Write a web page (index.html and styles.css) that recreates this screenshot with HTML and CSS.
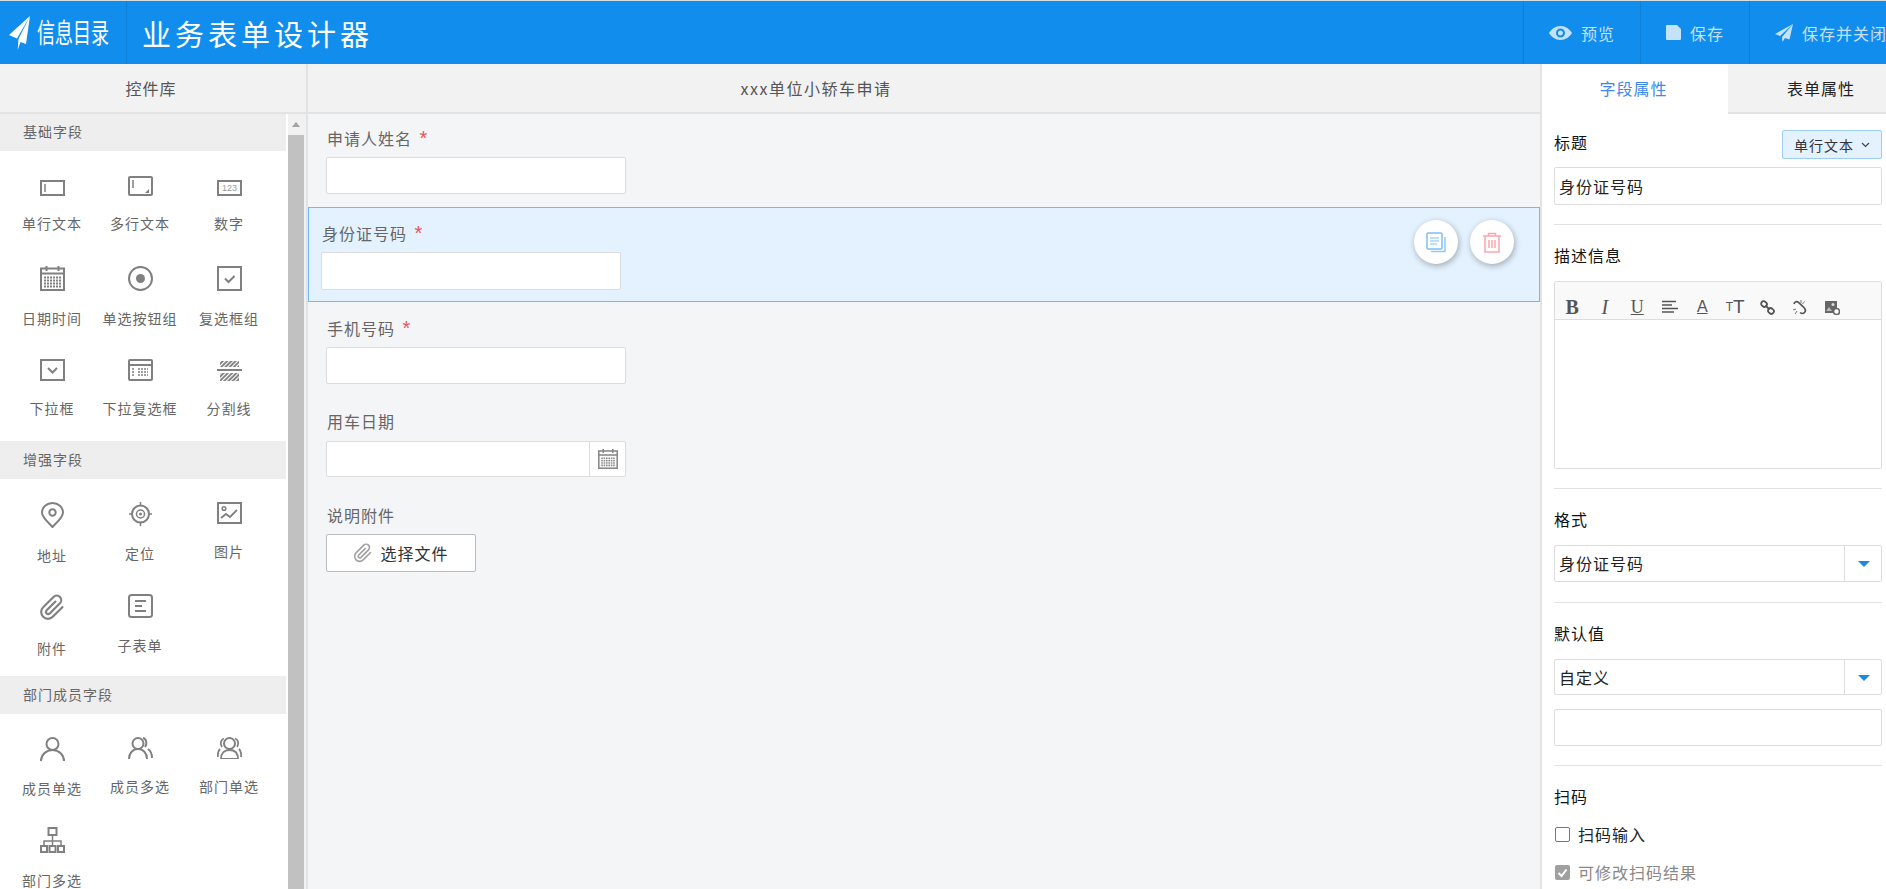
FILE: index.html
```html
<!DOCTYPE html>
<html lang="zh-CN">
<head>
    <meta charset="UTF-8">
    <title>业务表单设计器</title>
    <link rel="stylesheet" href="styles.css">
</head>
<body>
    <svg class="sprite" width="0" height="0">
        <symbol id="i-cal" viewBox="0 0 25 25">
            <path d="M6.5 0v5M18.5 0v5" stroke-width="2"/>
            <rect x="1" y="2.5" width="23" height="21.5" stroke-width="2"/>
            <path d="M1 7.5h23" stroke-width="2"/>
            <path d="M4 11.5h17M4 14.5h17M4 17.5h17M4 20.5h17" stroke-width="2" stroke-dasharray="2 1"/>
        </symbol>
        <symbol id="i-clip" viewBox="0 0 24 24">
            <path d="M21.4 11.1l-9.2 9.2a6 6 0 0 1-8.5-8.5l9.2-9.2a4 4 0 0 1 5.7 5.7l-9.2 9.2a2 2 0 0 1-2.8-2.8l8.5-8.5" stroke-width="1.9"/>
        </symbol>
    </svg>

    <header class="topbar">
        <div class="logo">
            <svg class="logo-plane" width="24" height="36" viewBox="0 0 24 36">
                <path d="M22 0L1 19l8 3.5L22 0zM22 0L10.5 23l-.8 11 2.8-8 5.5 2L22 0z" fill="#fff"/>
            </svg>
            <span class="logo-text">信息目录</span>
        </div>
        <div class="app-title">业务表单设计器</div>
        <div class="top-btn">
            <svg width="23" height="14" viewBox="0 0 23 14"><path d="M11.5 0C6.5 0 2.500 3 0 7c2.500 4 6.500 7 11.500 7S20.500 11 23 7C20.500 3 16.500 0 11.500 0zm0 11.500a4.500 4.500 0 1 1 0-9 4.500 4.500 0 0 1 0 9zm0-7a2.500 2.500 0 1 0 0 5 2.500 2.500 0 0 0 0-5z" fill="#c4e2fa" fill-rule="evenodd"/></svg>
            <span>预览</span>
        </div>
        <div class="top-btn">
            <svg width="15" height="15" viewBox="0 0 15 15"><path d="M1 0h10l4 4v10a1 1 0 0 1-1 1H1a1 1 0 0 1-1-1V1a1 1 0 0 1 1-1z" fill="#c4e2fa"/></svg>
            <span>保存</span>
        </div>
        <div class="top-btn">
            <svg width="18" height="18" viewBox="0 0 18 18"><path d="M18 0L0 10l5 2L18 0zM18 0L7 13l.5 5 2.500-4 4.500 1.500L18 0z" fill="#c4e2fa"/></svg>
            <span>保存并关闭</span>
        </div>
    </header>

    <main class="workspace">
        <aside class="lib">
            <div class="col-head">控件库</div>
            <div class="lib-body">
                <div class="lib-list">
                    <div class="lib-section">基础字段</div>
                    <div class="lib-grid lib-grid-base">
                        <div class="ctl">
                            <svg width="25" height="22" viewBox="0 0 25 22"><rect x="1" y="7" width="23" height="14" stroke-width="2"/><path d="M5 10v8" stroke-width="1.500"/></svg>
                            <span>单行文本</span>
                        </div>
                        <div class="ctl">
                            <svg width="25" height="22" viewBox="0 0 25 22"><rect x="1" y="3" width="23" height="18" rx="1" stroke-width="2"/><path d="M5 6v8" stroke-width="1.500"/><path d="M17 19l4-4v4z" fill="#808080" stroke="none"/></svg>
                            <span>多行文本</span>
                        </div>
                        <div class="ctl">
                            <svg width="25" height="22" viewBox="0 0 25 22"><rect x="1" y="7" width="23" height="14" stroke-width="2"/><text x="12.500" y="17" class="ico-num">123</text></svg>
                            <span>数字</span>
                        </div>
                        <div class="ctl">
                            <svg width="25" height="29" viewBox="0 0 25 29"><use href="#i-cal" y="4" width="25" height="25"/></svg>
                            <span>日期时间</span>
                        </div>
                        <div class="ctl">
                            <svg width="25" height="29" viewBox="0 0 25 29"><circle cx="12.500" cy="16.500" r="11.500" stroke-width="2"/><circle cx="12.500" cy="16.500" r="4.500" fill="#808080" stroke="none"/></svg>
                            <span>单选按钮组</span>
                        </div>
                        <div class="ctl">
                            <svg width="25" height="29" viewBox="0 0 25 29"><rect x="1" y="5" width="23" height="23" stroke-width="2"/><path d="M8 16.500l3.500 3.500 6-6" stroke-width="2"/></svg>
                            <span>复选框组</span>
                        </div>
                        <div class="ctl">
                            <svg width="25" height="24" viewBox="0 0 25 24"><rect x="1" y="3" width="23" height="20" stroke-width="2"/><path d="M8 11l4.500 4.500L17 11" stroke-width="2"/></svg>
                            <span>下拉框</span>
                        </div>
                        <div class="ctl">
                            <svg width="25" height="24" viewBox="0 0 25 24"><rect x="1" y="3" width="23" height="20" rx="1" stroke-width="2"/><path d="M1 8h23" stroke-width="2"/><path d="M4 12h3M4 15h3M4 18h3M10 12h10M10 15h10M10 18h10" stroke-width="1.500" stroke-dasharray="2 1"/></svg>
                            <span>下拉复选框</span>
                        </div>
                        <div class="ctl">
                            <svg width="25" height="24" viewBox="0 0 25 24"><defs><pattern id="hatch" width="3" height="3" patternUnits="userSpaceOnUse" patternTransform="rotate(45)"><rect width="1.500" height="3" fill="#aaa"/></pattern></defs><rect x="3" y="4" width="19" height="6" fill="url(#hatch)" stroke="none"/><path d="M0 13h25" stroke-width="2"/><rect x="3" y="16" width="19" height="8" fill="url(#hatch)" stroke="none"/></svg>
                            <span>分割线</span>
                        </div>
                    </div>

                    <div class="lib-section">增强字段</div>
                    <div class="lib-grid">
                        <div class="ctl">
                            <svg width="25" height="26" viewBox="0 0 25 26"><path d="M12.500 25C8 20 2 15.500 2 10.500a10.500 9.500 0 0 1 21 0C23 15.500 17 20 12.500 25z" stroke-width="2"/><circle cx="12.500" cy="10.500" r="3.200" stroke-width="2"/></svg>
                            <span>地址</span>
                        </div>
                        <div class="ctl">
                            <svg width="25" height="24" viewBox="0 0 25 24"><circle cx="12.500" cy="12" r="8.500" stroke-width="2"/><circle cx="12.500" cy="12" r="4" stroke-width="1.500"/><circle cx="12.500" cy="12" r="1.500" fill="#808080" stroke="none"/><path d="M12.500 0v3.500M12.500 20.500V24M1 12h3M21 12h3" stroke-width="1.500"/></svg>
                            <span>定位</span>
                        </div>
                        <div class="ctl">
                            <svg width="25" height="22" viewBox="0 0 25 22"><rect x="1" y="1" width="23" height="20" stroke-width="2"/><circle cx="7" cy="6.500" r="1.800" stroke-width="1.500"/><path d="M4 16l5-4 4 3 7-7" stroke-width="1.800"/></svg>
                            <span>图片</span>
                        </div>
                        <div class="ctl">
                            <svg width="27" height="27"><use href="#i-clip" width="27" height="27"/></svg>
                            <span>附件</span>
                        </div>
                        <div class="ctl">
                            <svg width="25" height="24" viewBox="0 0 25 24"><rect x="1" y="1" width="23" height="22" rx="2.500" stroke-width="2"/><path d="M7 7h11M7 12h7M7 17h11" stroke-width="1.800"/></svg>
                            <span>子表单</span>
                        </div>
                    </div>

                    <div class="lib-section">部门成员字段</div>
                    <div class="lib-grid">
                        <div class="ctl">
                            <svg width="25" height="24" viewBox="0 0 25 24"><circle cx="12.500" cy="7" r="6" stroke-width="2"/><path d="M1 24c0-6 5-11 11.500-11S24 18 24 24" stroke-width="2"/></svg>
                            <span>成员单选</span>
                        </div>
                        <div class="ctl">
                            <svg width="25" height="22" viewBox="0 0 25 22"><circle cx="10" cy="6.500" r="5.500" stroke-width="2"/><path d="M1 22c0-6 4-10 9-10s9 4 9 10M15 1c3.500 1 4.500 6 2 9M20 12c3 2 4 5 4 9" stroke-width="2"/></svg>
                            <span>成员多选</span>
                        </div>
                        <div class="ctl">
                            <svg width="25" height="22" viewBox="0 0 25 22"><circle cx="12.500" cy="6.500" r="5.500" stroke-width="2"/><path d="M4 22c0-6 3.500-9 8.500-9s8.500 3 8.500 9zM7 1.500C3.500 2.500 3 7 5 10M18 1.500c3.500 1 4 5.500 2 8.500M3 12c-2 2-2.500 5-2 8M22 12c2 2 2.500 5 2 8" stroke-width="1.800"/></svg>
                            <span>部门单选</span>
                        </div>
                        <div class="ctl">
                            <svg width="25" height="26" viewBox="0 0 25 26"><rect x="8.500" y="1" width="8" height="7" stroke-width="2"/><path d="M12.500 8v11M4 19v-5h17v5" stroke-width="1.500"/><rect x="1" y="19" width="6" height="6" stroke-width="2"/><rect x="9.500" y="19" width="6" height="6" stroke-width="2"/><rect x="18" y="19" width="6" height="6" stroke-width="2"/></svg>
                            <span>部门多选</span>
                        </div>
                    </div>
                </div>
                <div class="scrollbar">
                    <div class="scroll-up"></div>
                    <div class="scroll-thumb"></div>
                </div>
            </div>
        </aside>

        <section class="canvas">
            <div class="col-head canvas-head">xxx单位小轿车申请</div>
            <div class="field field-first">
                <label>申请人姓名 <em>*</em></label>
                <input class="text-input" type="text">
            </div>
            <div class="field field-active">
                <label>身份证号码 <em>*</em></label>
                <input class="text-input" type="text">
                <div class="field-tools">
                    <button class="round-btn">
                        <svg width="20" height="21" viewBox="0 0 20 21" fill="none"><path d="M5 19.500h14V5" stroke="#8ec9f7" stroke-width="1.500"/><rect x="1" y="1" width="15" height="16" rx="1" stroke="#7dbff5" stroke-width="1.500" fill="#fff"/><path d="M4 6h9M4 9h9M4 12h7" stroke="#a5d4f9" stroke-width="1.500"/></svg>
                    </button>
                    <button class="round-btn">
                        <svg width="20" height="21" viewBox="0 0 20 21" fill="none" stroke="#fba6ab" stroke-width="1.500"><path d="M1 4h18M6.500 4V1.500h7V4M3 4v16h14V4M7 8v8M10 8v8M13 8v8"/></svg>
                    </button>
                </div>
            </div>
            <div class="field field-phone">
                <label>手机号码 <em>*</em></label>
                <input class="text-input" type="text">
            </div>
            <div class="field field-date">
                <label>用车日期</label>
                <div class="date-input">
                    <span class="date-value"></span>
                    <span class="date-addon"><svg width="20" height="20"><use href="#i-cal" width="20" height="20"/></svg></span>
                </div>
            </div>
            <div class="field">
                <label>说明附件</label>
                <button class="file-btn">
                    <svg width="20" height="20"><use href="#i-clip" width="20" height="20"/></svg>
                    <span>选择文件</span>
                </button>
            </div>
        </section>

        <aside class="props">
            <div class="tabs">
                <div class="tab tab-on">字段属性</div>
                <div class="tab">表单属性</div>
            </div>
            <div class="props-body">
                <div class="prop prop-title">
                    <div class="prop-row">
                        <span class="prop-label">标题</span>
                        <span class="type-btn">单行文本
                            <svg width="9" height="6" viewBox="0 0 9 6" fill="none"><path d="M1 1l3.500 3.500L8 1" stroke="#444" stroke-width="1.200"/></svg>
                        </span>
                    </div>
                    <input class="prop-input" type="text" value="身份证号码">
                </div>
                <div class="prop">
                    <div class="prop-label">描述信息</div>
                    <div class="editor">
                        <div class="editor-bar">
                            <span class="tool tool-b">B</span>
                            <span class="tool tool-i">I</span>
                            <span class="tool tool-u">U</span>
                            <span class="tool"><svg width="16" height="14" viewBox="0 0 16 14" fill="none" stroke="#555" stroke-width="1.500"><path d="M0 1.500h14M0 5h10M0 8.500h16M0 12h12"/></svg></span>
                            <span class="tool tool-a">A</span>
                            <span class="tool tool-t"><small>T</small>T</span>
                            <span class="tool"><svg width="15" height="15" viewBox="0 0 15 15" fill="none" stroke="#555" stroke-width="1.800"><rect x="1" y="1.500" width="6" height="5" rx="2.500" transform="rotate(40 4 4)"/><rect x="8" y="8.500" width="6" height="5" rx="2.500" transform="rotate(40 11 11)"/><path d="M5.500 5.500l4 4"/></svg></span>
                            <span class="tool"><svg width="15" height="15" viewBox="0 0 15 15" fill="none" stroke="#555" stroke-width="1.700"><path d="M2 4c.5-2.500 3-3 4.500-1.500L11.500 7c2 2 2.500 4 1 5.500s-3.500 1-4.500 0"/><path d="M9 0v3M12.500 1.500L10.500 4M1 10l3-1M3 14l2-3" stroke-width="1" stroke="#777"/></svg></span>
                            <span class="tool"><svg width="15" height="15" viewBox="0 0 15 15"><rect x="0" y="1" width="12" height="12" fill="#666"/><circle cx="8" cy="4.500" r="1.500" fill="#ddd"/><path d="M1 11l3-4 3 4z" fill="#bbb"/><circle cx="11.500" cy="11.500" r="3" fill="#fff" stroke="#666" stroke-width="1.500"/></svg></span>
                        </div>
                        <div class="editor-body"></div>
                    </div>
                </div>
                <div class="prop prop-format">
                    <div class="prop-label">格式</div>
                    <div class="select-box">
                        <span class="select-value">身份证号码</span>
                        <span class="select-arrow"></span>
                    </div>
                </div>
                <div class="prop prop-default">
                    <div class="prop-label">默认值</div>
                    <div class="select-box">
                        <span class="select-value">自定义</span>
                        <span class="select-arrow"></span>
                    </div>
                    <input class="prop-input prop-input-plain" type="text">
                </div>
                <div class="prop prop-scan">
                    <div class="prop-label">扫码</div>
                    <div class="check-row">
                        <span class="check-box"></span>
                        <span>扫码输入</span>
                    </div>
                    <div class="check-row check-row-off">
                        <span class="check-box check-box-on">
                            <svg width="15" height="15" viewBox="0 0 15 15" fill="none"><path d="M3.500 8l3 3 5-6.500" stroke="#fff" stroke-width="2"/></svg>
                        </span>
                        <span>可修改扫码结果</span>
                    </div>
                </div>
            </div>
        </aside>
    </main>
</body>
</html>
```

FILE: styles.css
```css
* {
    box-sizing: border-box;
}
html, body {
    height: 100%;
}
body {
    margin: 0;
    overflow: hidden;
    background-color: #fff;
    border-top: 1px solid #d5dde3;
    font-family: "Noto Sans CJK SC", "Noto Sans", sans-serif;
    font-size: 16px;
    line-height: 20px;
    letter-spacing: 1px;
    color: #333;
    display: flex;
    flex-direction: column;
}
.sprite {
    position: absolute;
}
svg {
    display: block;
}
.lib svg,
.date-addon svg,
.file-btn svg {
    fill: none;
    stroke: #808080;
}
.date-addon svg {
    stroke: #8a8a8a;
}
.file-btn svg {
    stroke: #a0a0a0;
}

/* top bar */
.topbar {
    height: 63px;
    flex-shrink: 0;
    display: flex;
    background-color: #118ded;
    color: #fff;
    overflow: hidden;
}
.logo {
    width: 127px;
    flex-shrink: 0;
    display: flex;
    padding: 15px 0 0 8px;
    border-right: 1px solid #0f80d8;
}
.logo-text {
    display: block;
    margin: -3px 0 0 5px;
    height: 24px;
    font-size: 18px;
    line-height: 24px;
    letter-spacing: 0;
    white-space: nowrap;
    transform: scaleY(1.5);
    transform-origin: top;
}
.app-title {
    width: 1396px;
    flex-shrink: 0;
    padding: 14px 0 0 15px;
    font-size: 29px;
    line-height: 36px;
    letter-spacing: 4px;
}
.top-btn {
    flex-shrink: 0;
    display: flex;
    align-items: center;
    gap: 9px;
    padding: 0 25px;
    border-left: 1px solid #0f80d8;
    color: #c4e2fa;
    white-space: nowrap;
}

/* three columns */
.workspace {
    flex: 1;
    min-height: 0;
    display: flex;
}
.col-head {
    height: 50px;
    flex-shrink: 0;
    background-color: #f2f2f2;
    border-bottom: 2px solid #e3e3e3;
    line-height: 48px;
    text-align: center;
    color: #555;
}

/* control library */
.lib {
    width: 308px;
    flex-shrink: 0;
    display: flex;
    flex-direction: column;
    border-right: 2px solid #e3e3e3;
}
.lib .col-head {
    padding-right: 4px;
}
.lib-body {
    flex: 1;
    min-height: 0;
    display: flex;
    overflow: hidden;
    background-color: #fff;
}
.lib-list {
    width: 286px;
    flex-shrink: 0;
    margin-top: -1px;
}
.lib-section {
    height: 38px;
    padding-left: 23px;
    background-color: #eee;
    font-size: 14px;
    line-height: 36px;
    color: #666;
}
.lib-grid {
    display: grid;
    grid-template-columns: 88px 88px 90px;
    padding: 0 0 12px 8px;
}
.lib-grid-base {
    padding-bottom: 17px;
}
.ctl {
    display: flex;
    flex-direction: column;
    align-items: center;
    padding: 23px 0 6px;
    font-size: 14px;
    color: #666;
    white-space: nowrap;
}
.ctl span {
    margin-top: 17px;
}
.ico-num {
    font-family: "Liberation Sans", sans-serif;
    font-size: 9px;
    letter-spacing: 0;
    text-anchor: middle;
    fill: #999;
    stroke: none;
}
.scrollbar {
    width: 19px;
    margin-left: 2px;
    padding-right: 2px;
    display: flex;
    flex-direction: column;
    background-color: #f1f1f1;
}
.scroll-up {
    height: 21px;
    position: relative;
}
.scroll-up::after {
    content: "";
    position: absolute;
    left: 4px;
    top: 8px;
    border-left: 4px solid transparent;
    border-right: 4px solid transparent;
    border-bottom: 5px solid #a3a3a3;
}
.scroll-thumb {
    flex: 1;
    background-color: #c1c1c1;
}

/* form canvas */
.canvas {
    flex: 1;
    min-width: 0;
    background-color: #f4f5f7;
}
.canvas-head {
    padding-right: 216px;
    letter-spacing: 1.5px;
    color: #555;
}
.field {
    position: relative;
    padding: 15px 18px 13px;
    color: #666;
}
.field label {
    display: block;
    height: 20px;
    margin-bottom: 8px;
    padding-left: 1px;
    line-height: 18px;
}
.field em {
    font-family: "Liberation Sans", sans-serif;
    font-style: normal;
    font-size: 20px;
    color: #e8535a;
    margin-left: 3px;
}
.field-active {
    padding: 16px 12px 11px;
    background-color: #e3f2fe;
    border: 1px solid #6cbcf7;
}
.field-phone {
    padding-top: 17px;
}
.field-date {
    padding-bottom: 14px;
}
.text-input {
    display: block;
    width: 300px;
    height: 37px;
    border: 1px solid #ddd;
    border-radius: 2px;
    background-color: #fff;
}
.field-active .text-input {
    height: 38px;
}
.field-tools {
    position: absolute;
    top: 12px;
    right: 25px;
    display: flex;
    gap: 12px;
}
.round-btn {
    width: 44px;
    height: 44px;
    padding: 0;
    display: flex;
    align-items: center;
    justify-content: center;
    border: none;
    border-radius: 50%;
    background-color: #fff;
    box-shadow: 1px 2px 6px rgba(0, 0, 0, 0.3);
}
.date-input {
    width: 300px;
    height: 36px;
    margin-top: 9px;
    display: flex;
    border: 1px solid #ddd;
    border-radius: 2px;
    background-color: #fff;
}
.date-value {
    flex: 1;
}
.date-addon {
    width: 36px;
    display: flex;
    align-items: center;
    justify-content: center;
    border-left: 1px solid #ddd;
}
.file-btn {
    width: 150px;
    height: 38px;
    display: flex;
    align-items: center;
    justify-content: center;
    gap: 7px;
    padding: 0;
    border: 1px solid #bbb;
    border-radius: 2px;
    background-color: #fff;
    font-family: inherit;
    font-size: 16px;
    letter-spacing: 1px;
    color: #333;
}

/* property panel */
.props {
    width: 346px;
    flex-shrink: 0;
    display: flex;
    flex-direction: column;
    border-left: 2px solid #e3e3e3;
    overflow: hidden;
}
.tabs {
    height: 50px;
    flex-shrink: 0;
    display: flex;
}
.tab {
    width: 186px;
    flex-shrink: 0;
    background-color: #f2f2f2;
    border-bottom: 2px solid #e3e3e3;
    line-height: 48px;
    text-align: center;
    color: #222;
}
.tab-on {
    background-color: #fff;
    border-bottom: none;
    color: #3f87ee;
    padding-right: 3px;
}
.props-body {
    padding: 0 4px 0 12px;
    color: #111;
}
.prop {
    padding-bottom: 19px;
    border-bottom: 1px solid #e3e3e3;
    margin-bottom: 21px;
}
.prop-title {
    padding-top: 16px;
}
.prop-format {
    padding-bottom: 20px;
}
.prop-row {
    display: flex;
    justify-content: space-between;
    align-items: flex-start;
    margin-bottom: 8px;
}
.prop-row .prop-label {
    margin-top: 3px;
}
.prop-label {
    height: 20px;
    line-height: 18px;
}
.type-btn {
    width: 100px;
    height: 29px;
    display: flex;
    align-items: center;
    justify-content: center;
    gap: 7px;
    background-color: #e3f2fe;
    border: 1px solid #9ccdf2;
    border-radius: 2px;
    font-size: 14px;
    color: #333;
}
.prop-input {
    display: block;
    width: 100%;
    height: 38px;
    padding: 0 4px;
    border: 1px solid #ddd;
    border-radius: 2px;
    background-color: #fff;
    font-family: inherit;
    font-size: 16px;
    letter-spacing: 1px;
    color: #222;
}
.prop-input-plain {
    height: 37px;
    margin-top: 14px;
}
.editor {
    margin-top: 15px;
    border: 1px solid #ddd;
    border-radius: 2px;
}
.editor-bar {
    height: 38px;
    padding: 15px 0 0 1px;
    display: flex;
    background-color: #f9f9f9;
    border-bottom: 1px solid #ddd;
}
.tool {
    width: 32.500px;
    height: 20px;
    display: flex;
    align-items: center;
    justify-content: center;
    font-family: "Liberation Serif", serif;
    font-size: 20px;
    letter-spacing: 0;
    color: #555;
}
.tool-b {
    font-weight: bold;
}
.tool-i {
    font-style: italic;
}
.tool-u {
    font-size: 18px;
    text-decoration: underline;
}
.tool-a {
    font-family: "Liberation Sans", sans-serif;
    font-size: 16px;
    text-decoration: underline;
}
.tool-t {
    font-family: "Liberation Sans", sans-serif;
    font-size: 19px;
    align-items: flex-end;
    letter-spacing: -1px;
}
.tool-t small {
    font-size: 12px;
    margin-right: 1px;
}
.editor-body {
    height: 148px;
    background-color: #fff;
}
.select-box {
    height: 37px;
    margin-top: 15px;
    display: flex;
    border: 1px solid #ddd;
    border-radius: 2px;
}
.prop-default .select-box {
    height: 36px;
}
.select-value {
    flex: 1;
    padding-left: 4px;
    line-height: 34px;
    color: #222;
}
.select-arrow {
    width: 37px;
    position: relative;
    border-left: 1px solid #ddd;
}
.select-arrow::after {
    content: "";
    position: absolute;
    left: 13px;
    top: 15px;
    border-left: 6px solid transparent;
    border-right: 6px solid transparent;
    border-top: 6px solid #1e88e5;
}
.prop-scan {
    border-bottom: none;
}
.check-row {
    display: flex;
    align-items: center;
    gap: 8px;
    height: 20px;
    margin-top: 17px;
    color: #222;
}
.check-row-off {
    margin-top: 18px;
    color: #888;
}
.check-box {
    width: 15px;
    height: 15px;
    margin-left: 1px;
    border: 1.500px solid #777;
    border-radius: 2px;
    background-color: #fff;
}
.check-box-on {
    border: none;
    background-color: #a0a0a0;
}
```
